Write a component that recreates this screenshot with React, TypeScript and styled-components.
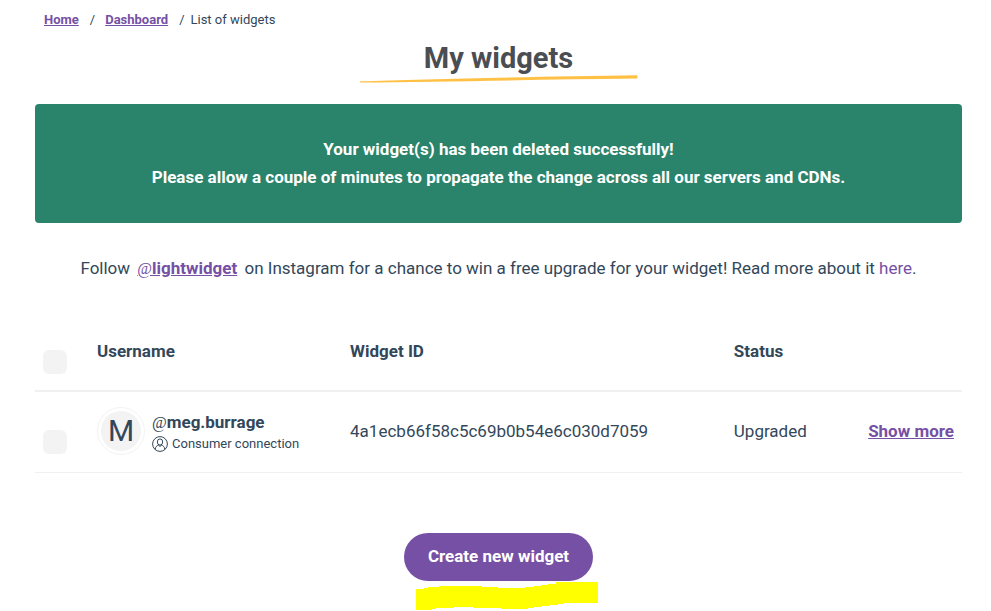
import React from "react";
import styled, { createGlobalStyle } from "styled-components";

const purple = "#7650a4";
const ink = "#32475a";

const GlobalStyle = createGlobalStyle`
  *, *::before, *::after { box-sizing: border-box; }
  body {
    margin: 0;
    background: #fff;
    color: ${ink};
    font-family: Roboto, "Liberation Sans", sans-serif;
    font-size: 17px;
    line-height: 28px;
  }
`;

const Page = styled.main`
  display: flex;
  flex-direction: column;
  padding: 10px 29px 0 35px;
`;

const Breadcrumb = styled.nav`
  padding-left: 9px;
  font-size: 13px;
  line-height: 20px;

  ol {
    display: flex;
    margin: 0;
    padding: 0;
    list-style: none;
  }
`;

const Crumb = styled.li`
  & + &::before {
    content: "/";
    padding: 0 10px 0 11px;
  }

  &[aria-current]::before {
    padding-right: 6px;
  }
`;

const TextLink = styled.a<{ $strong?: boolean }>`
  color: ${purple};
  font-weight: ${(p) => (p.$strong ? 700 : 400)};
  text-decoration: ${(p) => (p.$strong ? "underline" : "none")};
`;

const Heading = styled.header`
  display: flex;
  flex-direction: column;
  align-items: center;
  padding-top: 11px;
`;

const Title = styled.h1`
  margin: 0;
  color: #4a4e52;
  font-size: 29px;
  font-weight: 700;
  line-height: 34px;
`;

const Stroke = styled.svg`
  display: block;
  width: 278px;
  height: 8px;
`;

const Alert = styled.div`
  margin-top: 21px;
  padding: 31px 20px 32px;
  border-radius: 4px;
  background: #2a846b;
  color: #fff;
  font-weight: 700;
  text-align: center;

  p { margin: 0; }
`;

const Promo = styled.p`
  margin: 31px 0 28px;
  text-align: center;
`;

const Handle = styled(TextLink)`
  margin: 0 3px;
`;

const At = styled.span`
  font-family: "Liberation Serif", serif;
  font-size: 16px;
  font-weight: 400;
`;

const WidgetTable = styled.table`
  width: 100%;
  border-collapse: collapse;
  table-layout: fixed;
`;

const Column = styled.col<{ $width: string }>`
  width: ${(p) => p.$width};
`;

const HeadCell = styled.th`
  height: 80px;
  padding: 0 8px;
  border-bottom: 2px solid #f0f0f0;
  font-weight: 700;
  text-align: left;
`;

const Cell = styled.td<{ $end?: boolean }>`
  height: 81px;
  padding: 0 8px 2px;
  border-bottom: 1px solid #f0f0f0;
  text-align: ${(p) => (p.$end ? "right" : "left")};
  white-space: nowrap;
`;

const Checkbox = styled.input`
  display: block;
  width: 24px;
  height: 24px;
  margin: 22px 0 0;
  appearance: none;
  border-radius: 6px;
  background: #f3f3f3;
  cursor: pointer;

  &:checked { background: ${purple}; }
`;

const User = styled.div`
  display: flex;
  align-items: center;
  gap: 7px;
`;

const Avatar = styled.div`
  display: grid;
  place-items: center;
  flex: none;
  width: 48px;
  height: 48px;
  border: 1px solid #f3f3f3;
  border-radius: 50%;

  span {
    display: grid;
    place-items: center;
    width: 40px;
    height: 40px;
    border-radius: 50%;
    background: #f3f3f3;
    font-size: 30px;
  }
`;

const UserDetails = styled.div`
  padding-top: 4px;
`;

const UserName = styled.div`
  font-weight: 700;
  line-height: 22px;
`;

const Connection = styled.div`
  display: flex;
  align-items: center;
  gap: 4px;
  font-size: 13px;
  line-height: 20px;
`;

const Actions = styled.div`
  display: flex;
  flex-direction: column;
  align-items: center;
  margin-top: 60px;
`;

const CreateButton = styled.button`
  height: 48px;
  padding: 0 24px 2px;
  border: 0;
  border-radius: 24px;
  background: ${purple};
  color: #fff;
  font: inherit;
  font-weight: 700;
  cursor: pointer;
`;

const Marker = styled.svg`
  display: block;
  width: 182px;
  height: 28px;
  margin: 1px 0 0 16px;
`;

const PersonIcon = () => (
  <svg width="16" height="16" viewBox="0 0 16 16" fill="none" stroke={ink} aria-hidden="true">
    <circle cx="8" cy="8" r="7.4" />
    <ellipse cx="8" cy="6" rx="2.7" ry="3.1" />
    <path d="M3.2 13.4C3.5 10.8 4.8 9.6 6.4 9.3L8 10.4L9.6 9.3C11.2 9.6 12.5 10.8 12.8 13.4" />
  </svg>
);

const widgets = [
  {
    id: "4a1ecb66f58c5c69b0b54e6c030d7059",
    user: "meg.burrage",
    initial: "M",
    connection: "Consumer connection",
    status: "Upgraded",
  },
];

export default function App() {
  return (
    <>
      <GlobalStyle />
      <Page>
        <Breadcrumb aria-label="Breadcrumb">
          <ol>
            <Crumb><TextLink $strong href="#home">Home</TextLink></Crumb>
            <Crumb><TextLink $strong href="#dashboard">Dashboard</TextLink></Crumb>
            <Crumb aria-current="page">List of widgets</Crumb>
          </ol>
        </Breadcrumb>

        <Heading>
          <Title>My widgets</Title>
          <Stroke viewBox="0 0 278 8" aria-hidden="true">
            <path d="M0 6.2C60 4.6 180 1.2 277 0.2Q278 2 277 3.6C180 4.6 80 7 0 7.6Z" fill="#ffc145" />
          </Stroke>
        </Heading>

        <Alert role="status">
          <p>Your widget(s) has been deleted successfully!</p>
          <p>Please allow a couple of minutes to propagate the change across all our servers and CDNs.</p>
        </Alert>

        <Promo>
          Follow <Handle $strong href="#lightwidget"><At>@</At>lightwidget</Handle> on Instagram for a chance
          to win a free upgrade for your widget! Read more about it <TextLink href="#giveaway">here</TextLink>.
        </Promo>

        <WidgetTable>
          <colgroup>
            <Column $width="54px" />
            <Column $width="27.3%" />
            <Column $width="41.4%" />
            <Column $width="14%" />
            <Column $width="auto" />
          </colgroup>
          <thead>
            <tr>
              <HeadCell><Checkbox type="checkbox" aria-label="Select all widgets" /></HeadCell>
              <HeadCell scope="col">Username</HeadCell>
              <HeadCell scope="col">Widget ID</HeadCell>
              <HeadCell scope="col">Status</HeadCell>
              <HeadCell />
            </tr>
          </thead>
          <tbody>
            {widgets.map((w) => (
              <tr key={w.id}>
                <Cell><Checkbox type="checkbox" aria-label={`Select widget of ${w.user}`} /></Cell>
                <Cell>
                  <User>
                    <Avatar aria-hidden="true"><span>{w.initial}</span></Avatar>
                    <UserDetails>
                      <UserName><At>@</At>{w.user}</UserName>
                      <Connection><PersonIcon />{w.connection}</Connection>
                    </UserDetails>
                  </User>
                </Cell>
                <Cell>{w.id}</Cell>
                <Cell>{w.status}</Cell>
                <Cell $end><TextLink $strong href="#details">Show more</TextLink></Cell>
              </tr>
            ))}
          </tbody>
        </WidgetTable>

        <Actions>
          <CreateButton type="button">Create new widget</CreateButton>
          <Marker viewBox="0 0 182 28" aria-hidden="true">
            <path
              d="M0 7H8V6H12V5H23V4H66V5H82V6H109V5H118V4H125V3H132V2H140V0H182V21H148V22H142V23H133V24H125V25H118V26H112V27H85V26H57V25H38V26H20V27H16V28H0Z"
              fill="#ff0"
            />
          </Marker>
        </Actions>
      </Page>
    </>
  );
}
